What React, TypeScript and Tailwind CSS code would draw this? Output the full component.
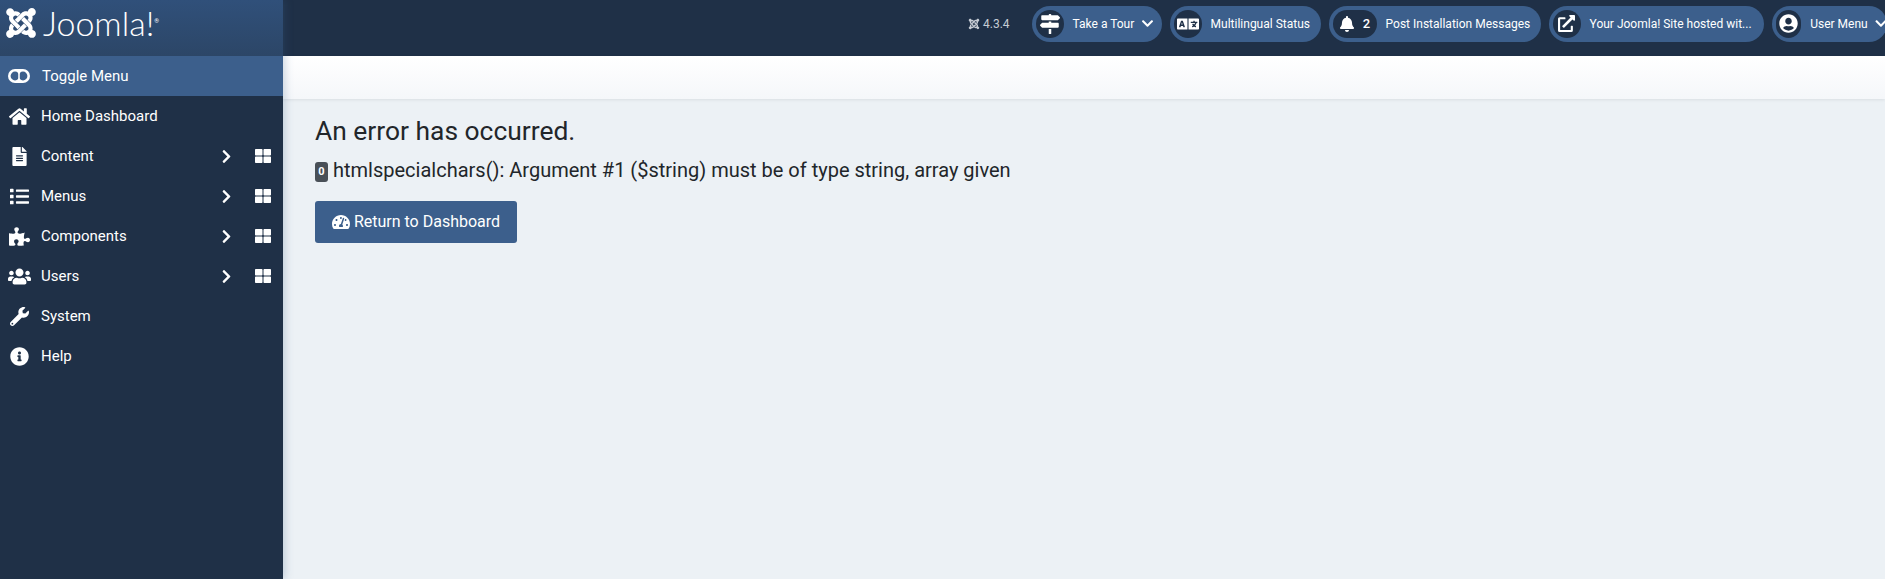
import React from 'react';
import {
  FaBell, FaChevronDown, FaChevronRight, FaExternalLinkAlt, FaFileAlt, FaHome, FaInfoCircle, FaJoomla,
  FaLanguage, FaList, FaMapSigns, FaPuzzlePiece, FaTachometerAlt, FaThLarge, FaUserCircle, FaUsers, FaWrench,
} from 'react-icons/fa';

const menu = [
  { label: 'Home Dashboard', icon: <FaHome size={21} /> },
  { label: 'Content', icon: <FaFileAlt size={19} />, sub: true },
  { label: 'Menus', icon: <FaList size={19} />, sub: true },
  { label: 'Components', icon: <FaPuzzlePiece size={21} />, sub: true },
  { label: 'Users', icon: <FaUsers size={23} />, sub: true },
  { label: 'System', icon: <FaWrench size={19} /> },
  { label: 'Help', icon: <FaInfoCircle size={19} /> },
];

const Pill = ({ icon, label, badge, chevron, w }: { icon: React.ReactNode; label: string; badge?: string; chevron?: boolean; w: string }) => (
  <div className={`flex items-center h-9 rounded-full bg-[#3c5f8c] pl-1 shrink-0 text-white ${w}`}>
    <div className={`flex items-center justify-center h-7 rounded-full bg-[#1f3047] ${badge ? 'w-[44px] gap-2' : 'w-7'}`}>
      {icon}
      {badge && <span className="text-[13px] font-medium">{badge}</span>}
    </div>
    <span className="ml-[9px] text-[12px] whitespace-nowrap">{label}</span>
    {chevron && <FaChevronDown size={13} className="ml-[7px]" />}
  </div>
);

export default function App() {
  return (
    <div className="flex h-[579px] w-[1885px] overflow-hidden bg-[#ecf1f5] font-['Roboto',sans-serif] text-[#22262a]">
      {/* Sidebar */}
      <aside className="w-[283px] shrink-0 flex flex-col bg-[#1f3047] text-white z-10 shadow-[2px_0_8px_rgba(60,95,140,0.25)]">
        <div className="h-14 flex items-center pl-[4px] pb-[10px] bg-gradient-to-b from-[#30507a] to-[#2c4667]">
          <FaJoomla size={34} />
          <span className="ml-[5px] text-[34px] leading-none font-['Lato',sans-serif] font-light">Joomla!</span>
          <span className="text-[6px] self-start mt-[16px]">®</span>
        </div>
        <div className="h-10 flex items-center bg-[#3c5f8c] pl-2">
          <svg width="22" height="14" viewBox="0 0 22 14" fill="none">
            <rect width="22" height="14" rx="7" fill="#fff" />
            <circle cx="7" cy="7" r="4.4" fill="#3c5f8c" />
            <circle cx="15" cy="7" r="4.4" fill="#3c5f8c" />
            <path d="M11 2.6v8.8" stroke="#fff" strokeWidth="1.6" />
          </svg>
          <span className="ml-3 text-[15px]">Toggle Menu</span>
        </div>
        {menu.map((item) => (
          <div key={item.label} className="h-10 flex items-center text-[15px]">
            <div className="w-[41px] flex justify-center pr-[3px]">{item.icon}</div>
            <span className="flex-1">{item.label}</span>
            {item.sub && (
              <>
                <FaChevronRight size={15} className="mr-[21px]" />
                <FaThLarge size={16} className="mr-[12px]" />
              </>
            )}
          </div>
        ))}
      </aside>

      <div className="flex-1 min-w-0 flex flex-col">
        {/* Header */}
        <header className="h-14 flex items-center gap-[8px] bg-[#1f3047] pb-[9px] pl-[685px] overflow-hidden">
          <div className="flex items-center gap-[3px] text-[12px] text-[#c6ccd4] mr-[14px]">
            <FaJoomla size={12} />
            <span>4.3.4</span>
          </div>
          <Pill w="w-[130px]" icon={<FaMapSigns size={20} />} label="Take a Tour" chevron />
          <Pill w="w-[151px]" icon={<FaLanguage size={22} />} label="Multilingual Status" />
          <Pill w="w-[212px]" icon={<FaBell size={16} />} badge="2" label="Post Installation Messages" />
          <Pill w="w-[215px]" icon={<FaExternalLinkAlt size={17} />} label="Your Joomla! Site hosted wit..." />
          <Pill w="w-[115px]" icon={<FaUserCircle size={19} />} label="User Menu" chevron />
        </header>

        {/* Subhead */}
        <div className="h-[43px] bg-gradient-to-b from-white to-[#f5f7fa] shadow-[0_1px_3px_rgba(0,0,0,0.08)]" />

        {/* Error */}
        <main className="pl-[32px] pt-[17px]">
          <h1 className="text-[26.4px] leading-[30px] font-normal">An error has occurred.</h1>
          <p className="mt-[10px] text-[20px] leading-[28px] flex items-center">
            <span className="mr-[5px] mt-[3px] inline-flex items-center justify-center w-[13px] h-[20px] rounded-[3px] bg-[#495057] text-white text-[11px] font-bold">0</span>
            htmlspecialchars(): Argument #1 ($string) must be of type string, array given
          </p>
          <button className="mt-[17px] h-[42px] w-[202px] flex items-center justify-center gap-[4px] rounded-[3px] bg-[#3c5f8c] text-white text-[16px]">
            <FaTachometerAlt size={18} />
            Return to Dashboard
          </button>
        </main>
      </div>
    </div>
  );
}
